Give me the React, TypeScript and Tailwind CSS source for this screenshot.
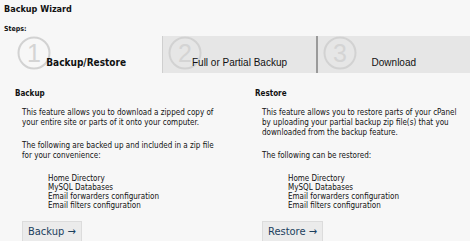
const body = "font-['DejaVu_Sans_Condensed','DejaVu_Sans',sans-serif]";

function StepCircle({ n }: { n: number }) {
  return (
    <svg width="34" height="34" viewBox="0 0 34 34" className="shrink-0">
      <circle cx="17" cy="17" r="15.5" fill="none" stroke="#d2d2d2" strokeWidth="2" />
      <text
        x="17"
        y="26"
        textAnchor="middle"
        fontSize="25"
        fill="#d4d4d4"
        fontFamily="'Liberation Sans', sans-serif"
        fontWeight="300"
      >
        {n}
      </text>
    </svg>
  );
}

function Tab({ n, label, active, last }: { n: number; label: string; active?: boolean; last?: boolean }) {
  return (
    <div
      className={`relative flex-1 h-[37px] ${active ? '' : 'bg-[#e6e6e6]'} ${
        n === 2 ? 'border-l border-[#cfcfcf]' : ''
      } ${last ? 'border-l-2 border-l-[#9a9a9a]' : ''}`}
    >
      <div className={`absolute top-0 ${active ? 'left-[7px]' : 'left-[5px]'}`}>
        <StepCircle n={n} />
      </div>
      <div
        className={`relative pt-[19px] text-center ${
          active
            ? `${body} font-bold text-[10px] text-[#111]`
            : "font-['Liberation_Sans',Arial,sans-serif] text-[10px] text-[#111]"
        }`}
      >
        {label}
      </div>
    </div>
  );
}

function Column({
  title,
  intro,
  lead,
  items,
  action,
}: {
  title: string;
  intro: string[];
  lead: string[];
  items: string[];
  action: string;
}) {
  return (
    <div className="pl-[15px]">
      <div className={`${body} font-bold text-[8px] leading-[10px]`}>{title}</div>
      <div className="pl-[7px] pt-[9px] text-[8px] leading-[10px]">
        {intro.map((l) => (
          <div key={l}>{l}</div>
        ))}
        <div className="h-[13px]" />
        {lead.map((l) => (
          <div key={l}>{l}</div>
        ))}
        <div className="pl-[26px] pt-[13px] leading-[9px]">
          {items.map((l) => (
            <div key={l}>{l}</div>
          ))}
        </div>
        <button
          type="button"
          className={`mt-[11px] h-[21px] px-[5px] bg-[#ebebeb] border border-[#dcdcdc] text-[11px] text-[#1b3f5e] ${body}`}
        >
          {action} →
        </button>
      </div>
    </div>
  );
}

export default function App() {
  const items = [
    'Home Directory',
    'MySQL Databases',
    'Email forwarders configuration',
    'Email filters configuration',
  ];
  return (
    <div className={`w-[470px] h-[241px] overflow-hidden bg-[#f7f7f7] text-[#111] ${body}`}>
      <div className="px-[4px] pt-[3px] font-bold text-[9px] leading-[12px]">Backup Wizard</div>
      <div className="px-[4px] pt-[9px] font-bold text-[7px] leading-[10px]">Steps:</div>
      <div className="flex pl-[10px] mt-[2px]">
        <Tab n={1} label="Backup/Restore" active />
        <Tab n={2} label="Full or Partial Backup" />
        <Tab n={3} label="Download" last />
      </div>
      <div className="grid grid-cols-[240px_1fr] pt-[16px]">
        <Column
          title="Backup"
          intro={['This feature allows you to download a zipped copy of', 'your entire site or parts of it onto your computer.']}
          lead={['The following are backed up and included in a zip file', 'for your convenience:']}
          items={items}
          action="Backup"
        />
        <Column
          title="Restore"
          intro={[
            'This feature allows you to restore parts of your cPanel',
            'by uploading your partial backup zip file(s) that you',
            'downloaded from the backup feature.',
          ]}
          lead={['The following can be restored:']}
          items={items}
          action="Restore"
        />
      </div>
    </div>
  );
}
